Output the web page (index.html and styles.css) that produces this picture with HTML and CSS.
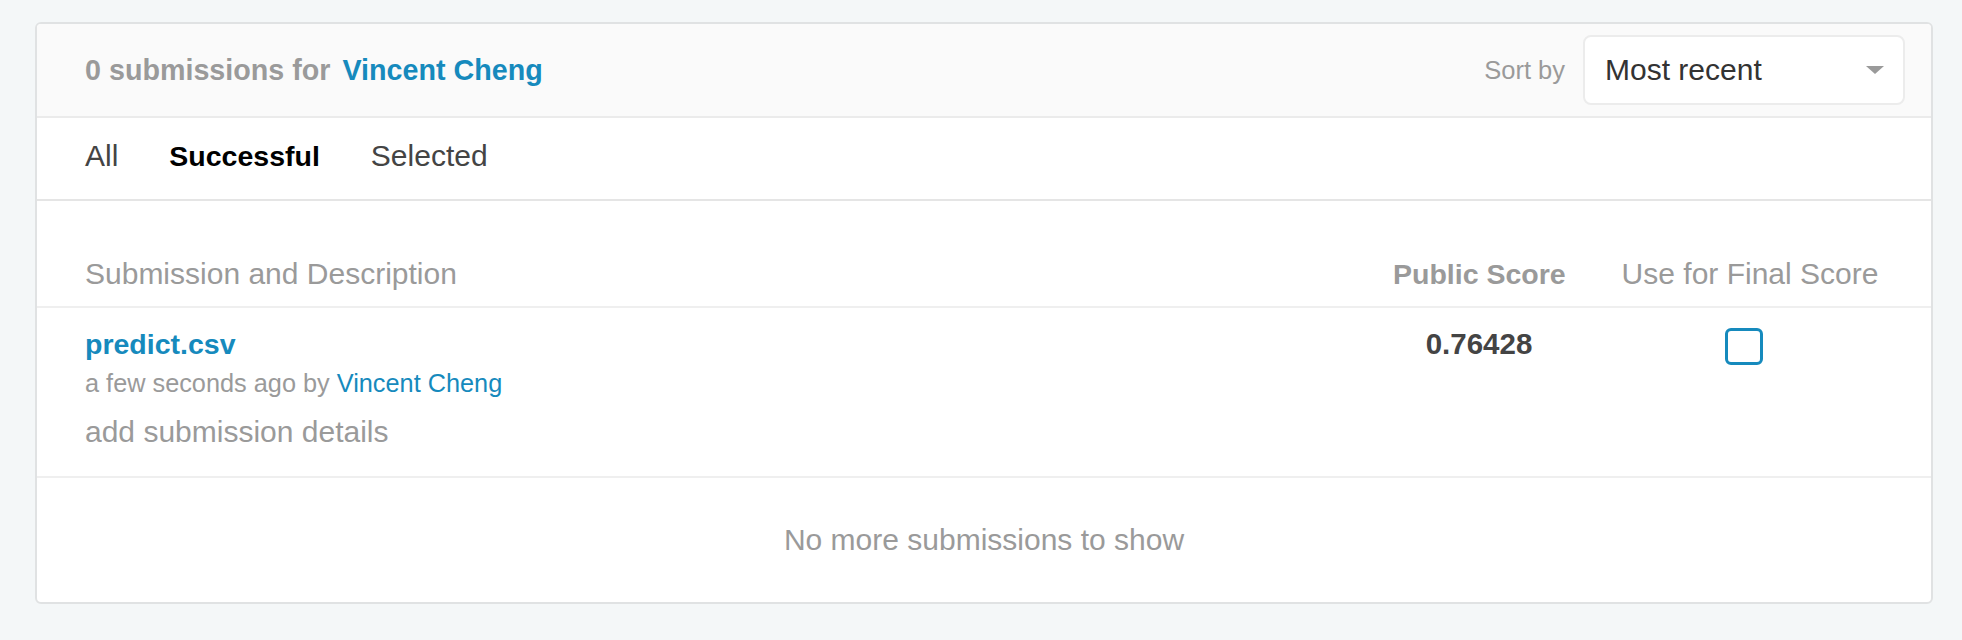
FILE: index.html
```html
<!DOCTYPE html>
<html>
<head>
<meta charset="utf-8">
<link rel="stylesheet" href="styles.css">
</head>
<body>
<div class="card">
  <div class="card-header">
    <div class="title"><span class="count">0 submissions for</span> <a class="user-link" href="#">Vincent Cheng</a></div>
    <div class="sort">
      <span class="sort-label">Sort by</span>
      <div class="select">
        <span class="select-value">Most recent</span>
        <span class="select-arrow"></span>
      </div>
    </div>
  </div>
  <div class="tabs">
    <span class="tab">All</span>
    <span class="tab tab-active">Successful</span>
    <span class="tab">Selected</span>
  </div>
  <div class="table-head grid">
    <div class="col-desc">Submission and Description</div>
    <div class="col-score head-score">Public Score</div>
    <div class="col-final">Use for Final Score</div>
  </div>
  <div class="table-row grid">
    <div class="col-desc">
      <a class="file-link" href="#">predict.csv</a>
      <div class="meta">a few seconds ago by <a class="meta-link" href="#">Vincent Cheng</a></div>
      <div class="details">add submission details</div>
    </div>
    <div class="col-score score">0.76428</div>
    <div class="col-final"><span class="checkbox"></span></div>
  </div>
  <div class="footer">No more submissions to show</div>
</div>
</body>
</html>
```

FILE: styles.css
```css
html, body {
  margin: 0;
  padding: 0;
  background: #f4f7f8;
}
body {
  font-family: "Liberation Sans", Arial, sans-serif;
  padding: 22px 29px 0 35px;
}
a { text-decoration: none; }

.card {
  background: #fff;
  border: 2px solid #e0e2e3;
  border-radius: 6px;
  overflow: hidden;
}

.card-header {
  display: flex;
  align-items: center;
  justify-content: space-between;
  background: #fafafa;
  padding: 11px 26px 11px 48px;
  border-bottom: 2px solid #ebebeb;
}
.title {
  font-size: 28.7px;
  font-weight: 700;
  line-height: 36px;
}
.count { color: #9a9a9a; }
.user-link { color: #168abd; margin-left: 4px; }

.sort {
  display: flex;
  align-items: center;
  gap: 18px;
}
.sort-label {
  font-size: 25.5px;
  color: #9a9a9a;
}
.select {
  height: 66px;
  width: 279px;
  background: #fff;
  border: 2px solid #ececec;
  border-radius: 8px;
  display: flex;
  align-items: center;
  justify-content: space-between;
  padding: 0 19px 0 20px;
  box-sizing: content-box;
}
.select-value {
  font-size: 30px;
  color: #333;
}
.select-arrow {
  width: 0;
  height: 0;
  border-left: 9px solid transparent;
  border-right: 9px solid transparent;
  border-top: 8px solid #9a9a9a;
}

.tabs {
  display: flex;
  gap: 51px;
  padding: 20px 48px 25px;
  border-bottom: 2px solid #e5e5e5;
  line-height: 36px;
}
.tab {
  font-size: 30px;
  color: #444;
}
.tab-active {
  font-size: 28.5px;
  font-weight: 700;
  color: #000;
}

.grid {
  display: grid;
  grid-template-columns: 1fr 172px 300px;
  column-gap: 35px;
  padding: 0 31px 0 48px;
}
.col-score, .col-final {
  text-align: center;
}
.table-head {
  padding-top: 55px;
  padding-bottom: 14px;
  line-height: 36px;
  font-size: 30px;
  color: #9a9a9a;
  border-bottom: 2px solid #efefef;
}
.head-score {
  font-size: 28.5px;
  font-weight: 700;
  white-space: nowrap;
}

.table-row {
  padding-top: 20px;
  padding-bottom: 26px;
  border-bottom: 2px solid #efefef;
}
.file-link {
  display: block;
  font-size: 28.5px;
  font-weight: 700;
  color: #168abd;
  line-height: 32px;
}
.meta {
  margin-top: 5px;
  font-size: 25.3px;
  line-height: 36px;
  color: #9a9a9a;
}
.meta-link { color: #168abd; }
.details {
  margin-top: 13px;
  font-size: 30px;
  line-height: 36px;
  color: #9a9a9a;
}
.score {
  font-size: 29.5px;
  font-weight: 700;
  color: #444;
  line-height: 32px;
}
.col-final {
  display: flex;
  justify-content: center;
}
.checkbox {
  display: block;
  width: 32px;
  height: 31px;
  border: 3px solid #168abd;
  border-radius: 6px;
  margin-right: 12px;
}

.footer {
  text-align: center;
  font-size: 30px;
  line-height: 36px;
  color: #9a9a9a;
  padding: 44px 0;
}
```
